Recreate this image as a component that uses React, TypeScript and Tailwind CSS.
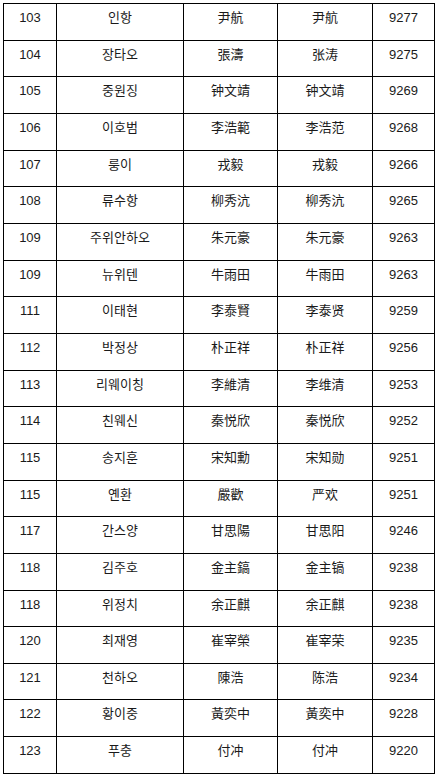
const rows: [string, string, string, string, string][] = [
  ["103", "인항", "尹航", "尹航", "9277"],
  ["104", "장타오", "張濤", "张涛", "9275"],
  ["105", "중원징", "钟文靖", "钟文靖", "9269"],
  ["106", "이호범", "李浩範", "李浩范", "9268"],
  ["107", "룽이", "戎毅", "戎毅", "9266"],
  ["108", "류수항", "柳秀沆", "柳秀沆", "9265"],
  ["109", "주위안하오", "朱元豪", "朱元豪", "9263"],
  ["109", "뉴위텐", "牛雨田", "牛雨田", "9263"],
  ["111", "이태현", "李泰賢", "李泰贤", "9259"],
  ["112", "박정상", "朴正祥", "朴正祥", "9256"],
  ["113", "리웨이칭", "李維清", "李维清", "9253"],
  ["114", "친웨신", "秦悦欣", "秦悦欣", "9252"],
  ["115", "송지훈", "宋知勳", "宋知勋", "9251"],
  ["115", "옌환", "嚴歡", "严欢", "9251"],
  ["117", "간스양", "甘思陽", "甘思阳", "9246"],
  ["118", "김주호", "金主鎬", "金主镐", "9238"],
  ["118", "위정치", "余正麒", "余正麒", "9238"],
  ["120", "최재영", "崔宰榮", "崔宰荣", "9235"],
  ["121", "천하오", "陳浩", "陈浩", "9234"],
  ["122", "황이중", "黃奕中", "黃奕中", "9228"],
  ["123", "푸충", "付冲", "付冲", "9220"],
];

const cell =
  "border border-black align-top text-center pt-[6px] leading-[16px]";

export default function App() {
  return (
    <div className="w-[440px] h-[781px] bg-white pt-[3px] pl-[3px] font-['Liberation_Sans','Noto_Sans_CJK_KR','Noto_Sans_CJK_TC',sans-serif] text-[13px] text-[#1a1a1a]">
      <table className="border-collapse w-[431px] h-[771px] table-fixed">
        <colgroup>
          <col className="w-[53px]" />
          <col className="w-[127px]" />
          <col className="w-[94px]" />
          <col className="w-[95px]" />
          <col className="w-[62px]" />
        </colgroup>
        <tbody>
          {rows.map((r, i) => (
            <tr key={i}>
              <td className={cell}>{r[0]}</td>
              <td className={cell}>{r[1]}</td>
              <td className={cell + " font-['Liberation_Sans','Noto_Sans_CJK_TC',sans-serif]"}>{r[2]}</td>
              <td className={cell + " font-['Liberation_Sans','Noto_Sans_CJK_SC',sans-serif]"}>{r[3]}</td>
              <td className={cell}>{r[4]}</td>
            </tr>
          ))}
        </tbody>
      </table>
    </div>
  );
}
